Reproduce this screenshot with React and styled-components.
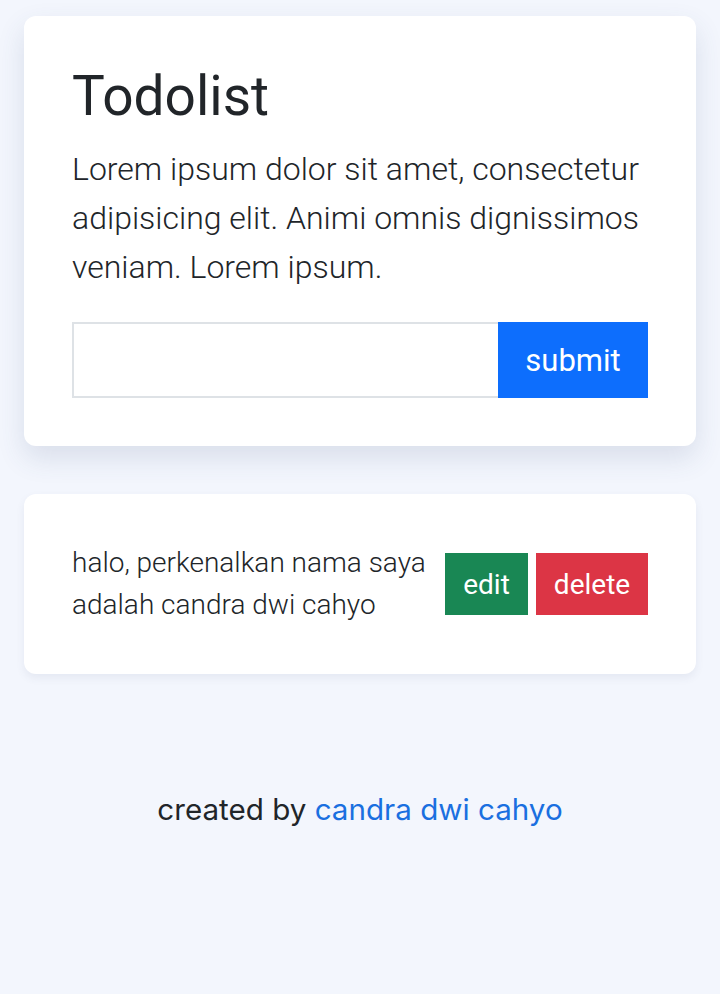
import React from "react";
import styled, { createGlobalStyle } from "styled-components";

const Global = createGlobalStyle`
  html, body { margin: 0; padding: 0; background: #f3f6fd; }
  body { font-family: Roboto, "Liberation Sans", sans-serif; color: #212529; }
  * { box-sizing: border-box; }
`;

const Page = styled.div`
  min-height: 994px;
  padding: 16px 24px;
  display: flex;
  flex-direction: column;
  gap: 48px;
`;

const Card = styled.div`
  background: #fff;
  border-radius: 12px;
  padding: 48px;
  box-shadow: ${(p) =>
    p.$big
      ? "0 12px 28px rgba(60, 80, 120, 0.14)"
      : "0 4px 8px rgba(60, 80, 120, 0.08)"};
`;

const Title = styled.h1`
  margin: 0 0 16px;
  font-family: Roboto, sans-serif;
  font-weight: 400;
  font-size: 55px;
  line-height: 65px;
  color: #212529;
`;

const Lead = styled.p`
  margin: 0 0 30px;
  font-family: Roboto, sans-serif;
  font-weight: 300;
  font-size: 32px;
  line-height: 49px;
  color: #212529;
`;

const Form = styled.form`
  display: flex;
  height: 76px;
`;

const Input = styled.input`
  flex: 1;
  min-width: 0;
  border: 2px solid #dee2e6;
  border-right: none;
  background: #fff;
  font-size: 28px;
  padding: 0 16px;
  outline: none;
`;

const Btn = styled.button`
  flex: none;
  border: none;
  border-radius: 0;
  color: #fff;
  background: ${(p) => p.$bg};
  font-family: Roboto, sans-serif;
  font-weight: 400;
  font-size: ${(p) => p.$size || 28}px;
  width: ${(p) => p.$w}px;
  padding: 0;
  height: ${(p) => p.$h || 62}px;
  cursor: pointer;
`;

const Row = styled.div`
  display: flex;
  align-items: center;
  gap: 8px;
`;

const ItemText = styled.p`
  margin: 0;
  flex: 1;
  font-family: Roboto, sans-serif;
  font-weight: 300;
  font-size: 28px;
  line-height: 42px;
  color: #212529;
`;

const Footer = styled.footer`
  margin-top: 69px;
  text-align: center;
  font-family: Inter, "Open Sans", sans-serif;
  font-size: 29.6px;
  color: #212529;
`;

const Link = styled.a`
  color: #1a6fe0;
  text-decoration: none;
`;

export default function App() {
  return (
    <>
      <Global />
      <Page>
        <Card $big>
          <Title>Todolist</Title>
          <Lead>
            Lorem ipsum dolor sit amet, consectetur adipisicing elit. Animi
            omnis dignissimos veniam. Lorem ipsum.
          </Lead>
          <Form onSubmit={(e) => e.preventDefault()}>
            <Input type="text" />
            <Btn $bg="#0d6efd" $size={31} $w={150} $h={76} type="submit">
              submit
            </Btn>
          </Form>
        </Card>
        <Card>
          <Row>
            <ItemText>halo, perkenalkan nama saya adalah candra dwi cahyo</ItemText>
            <Btn $bg="#198754" $w={83}>edit</Btn>
            <Btn $bg="#dc3545" $w={112}>delete</Btn>
          </Row>
        </Card>
        <Footer>
          created by <Link href="#">candra dwi cahyo</Link>
        </Footer>
      </Page>
    </>
  );
}
